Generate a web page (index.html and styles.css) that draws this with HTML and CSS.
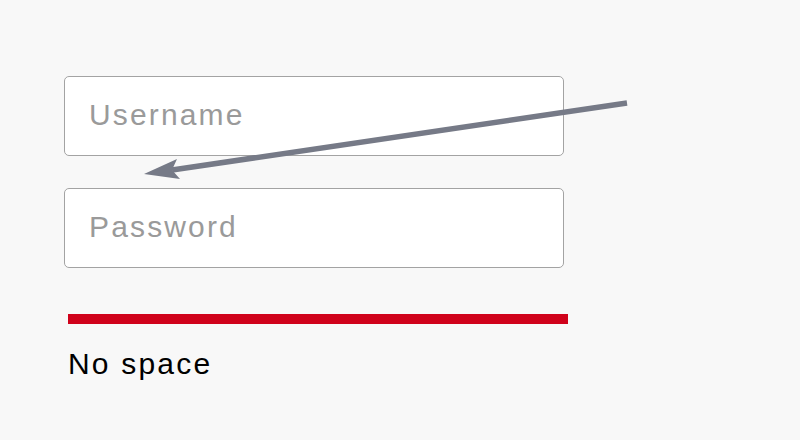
FILE: index.html
```html
<!DOCTYPE html>
<html lang="en">
  <head>
    <meta charset="UTF-8" />
    <meta name="viewport" content="width=device-width, initial-scale=1.0" />
    <title>Login</title>
    <link rel="stylesheet" href="styles.css">
  </head>
  <body>
    <form class="login">
      <input class="field" type="text" placeholder="Username" />
      <input class="field" type="password" placeholder="Password" />
      <div class="error">
        <div class="error-bar"></div>
        <p class="error-text">No space</p>
      </div>
    </form>

    <!-- pointer drawn over the form -->
    <svg class="pointer" width="800" height="440" viewBox="0 0 800 440">
      <line x1="627" y1="103" x2="172" y2="170" stroke="#767a87" stroke-width="5.5" />
      <polygon points="144,174 177,159 172,170 180,179" fill="#767a87" />
    </svg>
  </body>
</html>
```

FILE: styles.css
```css
body {
  margin: 0;
  background-color: #f8f8f8;
  font-family: "Liberation Sans", Arial, sans-serif;
  position: relative;
  height: 440px;
  overflow: hidden;
}

.login {
  display: flex;
  flex-direction: column;
  gap: 32px;
  padding: 76px 0 0 64px;
}

.field {
  box-sizing: border-box;
  width: 500px;
  height: 80px;
  padding: 0 24px 2px;
  border: 1px solid #a3a3a3;
  border-radius: 5px;
  background-color: #fff;
  font-family: "Liberation Sans", Arial, sans-serif;
  font-size: 30px;
  letter-spacing: 2.15px;
  color: #333;
  outline: none;
}

.field::placeholder {
  color: #9a9a9a;
}

.error {
  margin: 14px 0 0 4px;
}

.error-bar {
  width: 500px;
  height: 10px;
  background-color: #d0021b;
}

.error-text {
  margin: 23px 0 0;
  font-size: 30px;
  line-height: 34px;
  color: #000;
  letter-spacing: 2.2px;
}

.pointer {
  position: absolute;
  top: 0;
  left: 0;
}
```
